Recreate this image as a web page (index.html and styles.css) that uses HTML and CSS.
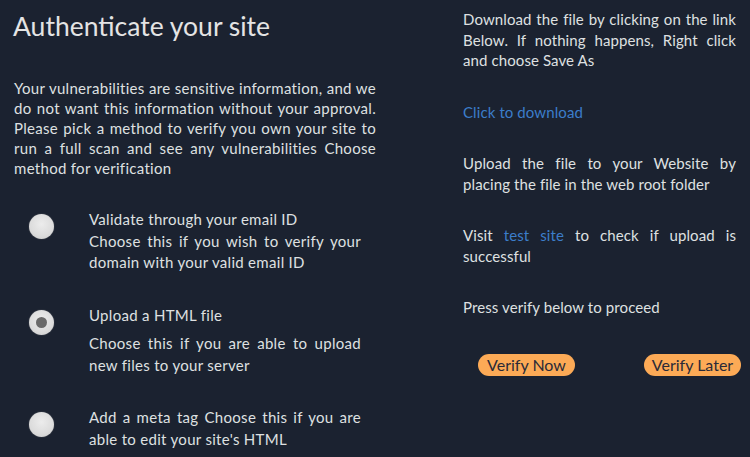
FILE: index.html
```html
<!DOCTYPE html>
<html>
  <head>
    <meta charset="utf-8" />
    <title>Authenticate your site</title>
    <link rel="stylesheet" href="styles.css">
  </head>
  <body>
    <div class="page">
      <div class="left">
        <h1>Authenticate your site</h1>
        <p class="intro">Your vulnerabilities are sensitive information, and we do not want this information without your approval. Please pick a method to verify you own your site to run a full scan and see any vulnerabilities Choose method for verification</p>

        <div class="option">
          <span class="radio"></span>
          <div class="option-text">
            <p>Validate through your email ID<br>Choose this if you wish to verify your domain with your valid email ID</p>
          </div>
        </div>

        <div class="option">
          <span class="radio checked"></span>
          <div class="option-text">
            <p class="option-title">Upload a HTML file</p>
            <p>Choose this if you are able to upload new files to your server</p>
          </div>
        </div>

        <div class="option">
          <span class="radio"></span>
          <div class="option-text">
            <p>Add a meta tag Choose this if you are able to edit your site's HTML</p>
          </div>
        </div>
      </div>

      <div class="right">
        <p>Download the file by clicking on the link Below. If nothing happens, Right click and choose Save As</p>
        <p><a href="#">Click to download</a></p>
        <p>Upload the file to your Website by placing the file in the web root folder</p>
        <p>Visit <a href="#">test site</a> to check if upload is successful</p>
        <p>Press verify below to proceed</p>
        <div class="actions">
          <button>Verify Now</button>
          <button>Verify Later</button>
        </div>
      </div>
    </div>
  </body>
</html>
```

FILE: styles.css
```css
html, body {
  margin: 0;
  height: 100%;
}
body {
  background-color: #1b2230;
  color: #dfe0e1;
  font-family: Lato, "Open Sans", sans-serif;
  font-size: 15px;
  letter-spacing: 0.3px;
  overflow: hidden;
}
a {
  color: #3c7dca;
  text-decoration: none;
}
p {
  margin: 0;
}
.page {
  display: grid;
  grid-template-columns: 362px 273px;
  column-gap: 87px;
  padding-left: 14px;
}

/* left column */
h1 {
  margin: 8px 0 0 -1px;
  font-size: 26.5px;
  font-weight: 400;
  line-height: 36px;
  letter-spacing: 0;
  color: #e4e4e4;
}
.intro {
  margin-top: 34px;
  line-height: 20px;
  text-align: justify;
}
.option {
  display: flex;
  align-items: flex-start;
  gap: 35px;
  padding-left: 15px;
  margin-top: 31px;
  width: 332px;
}
.option-text {
  flex: 1;
  line-height: 21.5px;
  text-align: justify;
}
.option-title {
  margin-bottom: 7px;
}
.radio {
  flex: none;
  position: relative;
  width: 25px;
  height: 25px;
  margin-top: 5px;
  border-radius: 50%;
  background: radial-gradient(circle at 50% 40%, #ececec 0%, #dcdcdc 60%, #c9c9c9 100%);
  box-shadow: 0 0 1px #999;
}
.radio.checked::after {
  content: "";
  position: absolute;
  left: 7px;
  top: 7px;
  width: 11px;
  height: 11px;
  border-radius: 50%;
  background: #6a6a6a;
}

/* right column */
.right {
  padding-top: 9px;
  letter-spacing: 0.1px;
}
.right p {
  line-height: 20.5px;
  text-align: justify;
  margin-bottom: 31px;
}
.actions {
  display: flex;
  justify-content: space-between;
  width: 263px;
  margin: 36px 0 0 15px;
}
.actions button {
  background-color: #fcaa56;
  border: none;
  border-radius: 11px;
  color: #2a2a38;
  font-family: Lato, "Open Sans", sans-serif;
  font-size: 16px;
  height: 22px;
  width: 97px;
  padding: 0;
  line-height: 22px;
  white-space: nowrap;
  cursor: pointer;
}
```
